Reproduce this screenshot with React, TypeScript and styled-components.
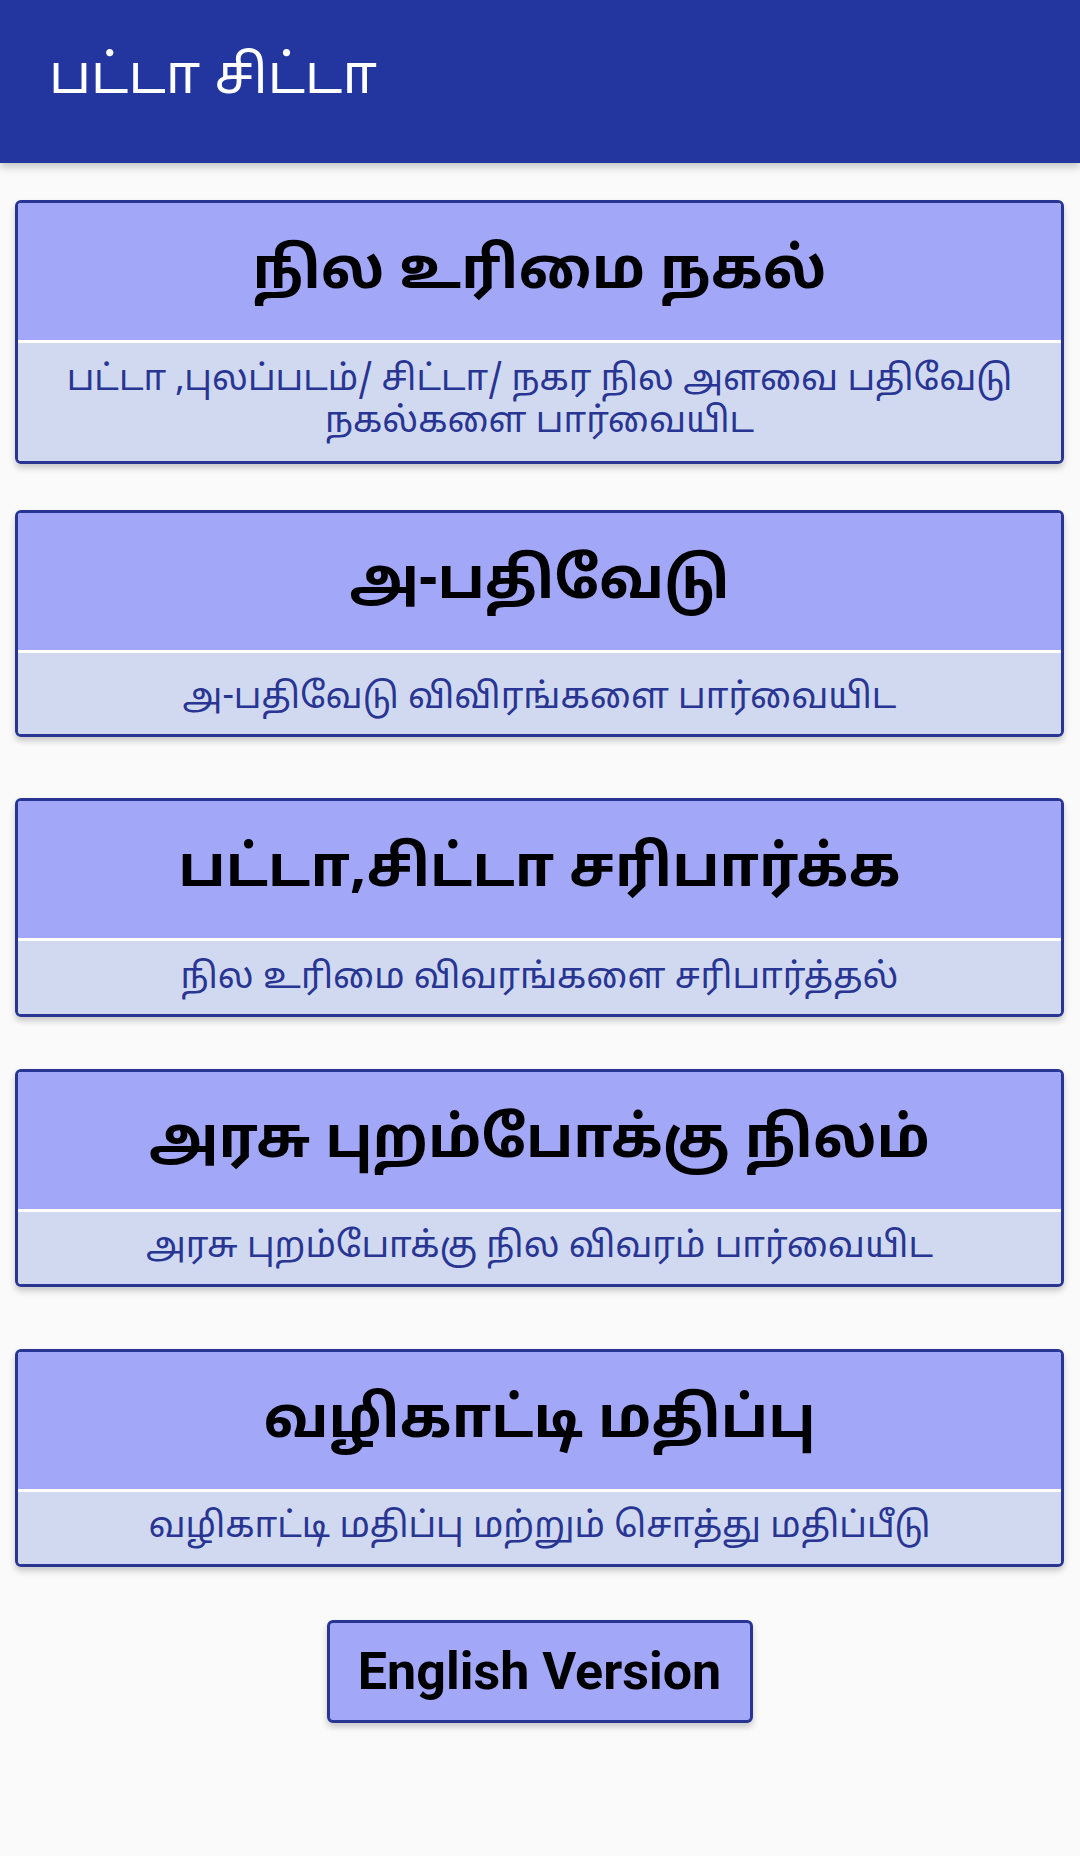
import styled, { createGlobalStyle } from "styled-components";

const GlobalStyle = createGlobalStyle`
  html, body {
    margin: 0;
    padding: 0;
    background: #fafafa;
    font-family: "Noto Sans Tamil", "Noto Sans Tamil UI", "Noto Sans", Roboto, sans-serif;
  }
`;

const BORDER_COLOR = "#283593";
const HEAD_COLOR = "#a2a7f8";
const BODY_COLOR = "#d1d9f1";

const cards = [
  {
    title: "நில உரிமை நகல்",
    desc: "பட்டா ,புலப்படம்/ சிட்டா/ நகர நில அளவை பதிவேடு நகல்களை பார்வையிட",
    top: 37,
    body: 118,
    shift: 0,
  },
  {
    title: "அ-பதிவேடு",
    desc: "அ-பதிவேடு விவிரங்களை பார்வையிட",
    top: 46,
    body: 81,
    shift: 10,
  },
  {
    title: "பட்டா,சிட்டா சரிபார்க்க",
    desc: "நில உரிமை விவரங்களை சரிபார்த்தல்",
    top: 61,
    body: 73,
    shift: 2,
  },
  {
    title: "அரசு புறம்போக்கு நிலம்",
    desc: "அரசு புறம்போக்கு நில விவரம் பார்வையிட",
    top: 52,
    body: 72,
    shift: 0,
  },
  {
    title: "வழிகாட்டி மதிப்பு",
    desc: "வழிகாட்டி மதிப்பு மற்றும் சொத்து மதிப்பீடு",
    top: 62,
    body: 72,
    shift: 0,
  },
];

const App = () => {
  return (
    <Page>
      <GlobalStyle />
      <AppBar>
        <AppTitle>பட்டா சிட்டா</AppTitle>
      </AppBar>
      <Content>
        {cards.map((item) => (
          <Card key={item.title} $top={item.top}>
            <CardHead>
              <CardTitle>{item.title}</CardTitle>
            </CardHead>
            <CardBody $height={item.body} $shift={item.shift}>
              <CardDesc>{item.desc}</CardDesc>
            </CardBody>
          </Card>
        ))}
        <VersionButton>English Version</VersionButton>
      </Content>
    </Page>
  );
};
export default App;

const Page = styled.div`
  min-height: 1856px;
  background: #fafafa;
`;

const AppBar = styled.header`
  height: 163px;
  background: #2336a0;
  display: flex;
  align-items: center;
  padding-left: 49px;
  box-shadow: 0 4px 8px rgba(0, 0, 0, 0.22);
  position: relative;
  z-index: 1;
`;

const AppTitle = styled.h1`
  margin: 0;
  color: #ffffff;
  font-size: 54px;
  font-weight: 400;
  padding-bottom: 4px;
`;

const Content = styled.main`
  display: flex;
  flex-direction: column;
  align-items: stretch;
  padding: 0 16px 0 15px;
`;

const Card = styled.section<{ $top: number }>`
  margin-top: ${(p) => p.$top}px;
  border: 3px solid ${BORDER_COLOR};
  border-radius: 6px;
  overflow: hidden;
  box-shadow: 0 4px 6px rgba(0, 0, 0, 0.2);
  display: flex;
  flex-direction: column;
`;

const CardHead = styled.div`
  height: 140px;
  box-sizing: border-box;
  padding-top: 4px;
  background: ${HEAD_COLOR};
  border-bottom: 3px solid #ffffff;
  display: flex;
  align-items: center;
  justify-content: center;
`;

const CardTitle = styled.h2`
  margin: 0;
  color: #000000;
  font-size: 57px;
  font-weight: 700;
  line-height: 1;
  text-align: center;
`;

const CardBody = styled.div<{ $height: number; $shift: number }>`
  height: ${(p) => p.$height}px;
  box-sizing: border-box;
  padding: ${(p) => p.$shift}px 20px 0;
  background: ${BODY_COLOR};
  display: flex;
  align-items: center;
  justify-content: center;
`;

const CardDesc = styled.p`
  margin: 0;
  color: ${BORDER_COLOR};
  font-size: 35.5px;
  line-height: 42px;
  text-align: center;
`;

const VersionButton = styled.button`
  align-self: center;
  margin-top: 53px;
  width: 426px;
  height: 103px;
  border: 3px solid ${BORDER_COLOR};
  border-radius: 6px;
  background: ${HEAD_COLOR};
  box-shadow: 0 4px 6px rgba(0, 0, 0, 0.2);
  color: #000000;
  font-family: Roboto, "Liberation Sans", sans-serif;
  font-size: 52px;
  font-weight: 700;
  cursor: pointer;
`;
